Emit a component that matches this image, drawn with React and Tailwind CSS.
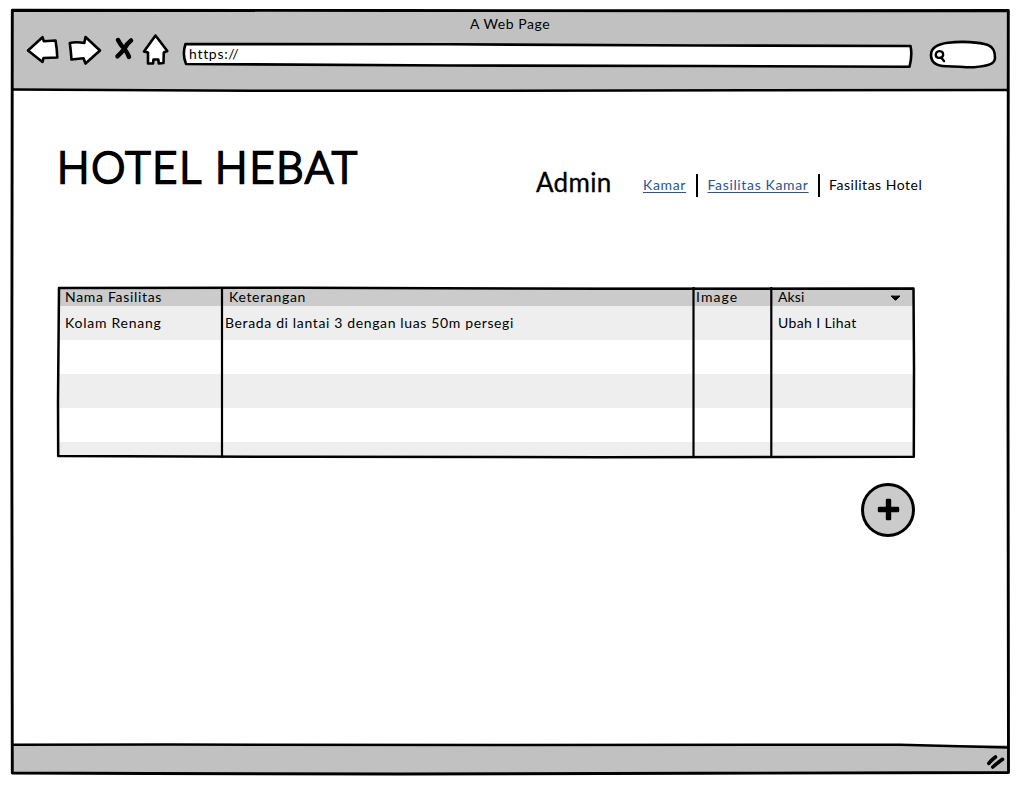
const stroke = {
  fill: "none",
  stroke: "#000",
  strokeWidth: 2.6,
  strokeLinecap: "round",
  strokeLinejoin: "round",
};

function NavIcons() {
  return (
    <svg width="150" height="40" viewBox="24 30 150 40" className="shrink-0" {...stroke} fill="#fff">
      <path d="M28 50.500L42.500 37.200L43.800 41.200L55.500 40.500Q57 49 57.300 57.500L43.500 58L42.500 62Z" />
      <path d="M69.800 43Q76 41.500 84.300 43L85.500 37L100 50.500L85.500 63.500L83.500 58.300L71.500 59.500Q70.800 50 69.800 43Z" />
      <path d="M118 40Q120.500 45 124.500 49Q127.500 53 129 56.800M131 40.500Q127 43.500 124.500 48.500Q121 53.500 117.500 56.300" fill="none" strokeWidth="4.500" />
      <path d="M155.500 35.500L167.300 51L163.800 52.500L163.500 63L158.800 63.500L158.300 59.500L153.500 59.500L153 63.500L148 63.500L148 52.500L144 51.500Z" />
    </svg>
  );
}

function AddressBar() {
  return (
    <div className="relative mt-[33px] h-[24px] w-[730px] shrink-0">
      <svg width="732" height="28" viewBox="182 42 732 28" className="absolute -top-px left-0" {...stroke} strokeWidth="2.600">
        <path d="M185.500 44L450 44.300L700 45.500L910.500 46Q912.500 55 909.500 66.800L700 66L450 65.500L186 64Q182 54 185.500 44Z" fill="#fff" />
      </svg>
      <span className="absolute left-[7px] top-[2px] text-[14px] leading-[18px] tracking-[0.7px]">https://</span>
    </div>
  );
}

function SearchBox() {
  return (
    <svg width="72" height="32" viewBox="928 38 72 32" className="ml-[16px] mt-[28px] shrink-0" {...stroke} strokeWidth="2.600">
      <path d="M931 55C931 48 938 44 948 42.800C962 41 979 42 988 45C994 47.500 995 52 995 58C995 64 988 66 974 67.200C965 67.500 955 66 946 66.200C936 66 931 62 931 55Z" fill="#fff" />
      <path d="M935.800 54.500C936 51.500 939 50.500 941.500 51.500C944 53 943.500 56.500 941.500 57.500C938.500 58.500 935.500 57.500 935.800 54.500ZM941.500 58L944 61" strokeWidth="2.400" />
    </svg>
  );
}

function FrameLines() {
  return (
    <svg width="1019" height="785" className="pointer-events-none absolute inset-0" {...stroke} strokeWidth="2.900" strokeLinecap="butt">
      <path d="M12.300 10.300L400 10.500L700 10.800L1008.300 10.500L1008 400L1008.500 772.500L700 773.300L400 774L150 773.500L12.300 773L11.800 400Z" />
      <path d="M12 89.500L250 90.700L500 90.800L750 90.200L1008 90" strokeWidth="2.500" />
      <path d="M12 744.800L170 744.500L500 745L900 744.800L1008 747.500" strokeWidth="2.500" />
    </svg>
  );
}

function TableLines() {
  return (
    <svg width="860" height="174" viewBox="56 286 860 174" className="pointer-events-none absolute -left-[2px] -top-px" {...stroke} strokeWidth="2.500" strokeLinecap="butt">
      <path d="M59 288L300 287.800L600 288.800L913.500 288.500L914 370L913.800 456.800L600 457.200L300 456.800L58.200 456L58 400Z" />
      <path d="M222 287V458M693.500 287V458M771.300 287V458" strokeWidth="2.200" />
    </svg>
  );
}

const cols = "grid grid-cols-[164px_471px_78px_143px]";

export default function App() {
  return (
    <div className="relative flex h-[785px] w-[1019px] flex-col overflow-hidden bg-white pb-[11px] pl-[12px] pr-[10px] pt-[10px] font-['Lato',sans-serif] text-[14px] text-black">
      <header className="relative flex h-[80px] shrink-0 bg-[#c1c1c1]">
        <div className="ml-[12px] mr-[8px] mt-[20px]">
          <NavIcons />
        </div>
        <AddressBar />
        <SearchBox />
        <h2 className="absolute left-[458px] top-[5px] text-[14px] leading-[18px] tracking-[0.55px]">A Web Page</h2>
      </header>

      <main className="flex min-h-0 flex-1 flex-col">
        <div className="flex h-[197px] shrink-0 whitespace-nowrap">
          <h1 className="ml-[45px] mt-[50px] w-[479px] text-[43px] font-light leading-[54px] tracking-[1.9px] [-webkit-text-stroke:2.4px_#000]">HOTEL HEBAT</h1>
          <h3 className="mt-[75px] w-[107px] text-[26px] leading-[34px] tracking-[0.3px] [-webkit-text-stroke:0.3px_#000]">Admin</h3>
          <nav className="mt-[84px] flex h-[24px] leading-[22px] tracking-[0.65px]">
            <a className="w-[53px] text-[#2a5590] underline underline-offset-2">Kamar</a>
            <span className="h-[23px] w-[2px] bg-black" />
            <a className="ml-[9.500px] w-[110px] text-[#2a5590] underline underline-offset-2">Fasilitas Kamar</a>
            <span className="h-[23px] w-[2px] bg-black" />
            <span className="ml-[9.500px] tracking-[0.52px]">Fasilitas Hotel</span>
          </nav>
        </div>

        <section className="relative ml-[46px] flex h-[170px] w-[856px] shrink-0 flex-col whitespace-nowrap tracking-[0.68px]">
          <div className={`${cols} h-[19px] shrink-0 bg-[#cbcbcb] leading-[20px]`}>
            <span className="pl-[7px]">Nama Fasilitas</span>
            <span className="pl-[7px]">Keterangan</span>
            <span className="pl-[3px] tracking-[1.100px]">Image</span>
            <span className="flex items-center pl-[7px] pr-[13px]">
              <span className="flex-1 tracking-[0.1px]">Aksi</span>
              <svg width="11" height="6" viewBox="0 0 11 6" className="mt-[2px]">
                <path d="M1 1Q5.500 1.300 10 1L6 5H5Z" stroke="#000" strokeWidth="1" strokeLinejoin="round" />
              </svg>
            </span>
          </div>
          <div className={`${cols} h-[34px] shrink-0 bg-[#eeeeee] leading-[34px]`}>
            <span className="pl-[7px] tracking-[0.75px]">Kolam Renang</span>
            <span className="pl-[3px] tracking-[0.64px]">Berada di lantai 3 dengan luas 50m persegi</span>
            <span />
            <span className="pl-[7px] tracking-[0.38px]">Ubah I Lihat</span>
          </div>
          <div className="h-[34px] shrink-0 bg-white" />
          <div className="h-[34px] shrink-0 bg-[#eeeeee]" />
          <div className="h-[34px] shrink-0 bg-white" />
          <div className="flex-1 bg-[#eeeeee]" />
          <TableLines />
        </section>

        <button aria-label="Tambah" className="ml-[849px] mt-[26px] flex size-[54px] shrink-0 items-center justify-center rounded-full border-[3px] border-black bg-[#cbcbcb]">
          <svg width="24" height="24" viewBox="0 0 24 24">
            <rect x="9.800" y="0.800" width="5.400" height="21.400" rx="1.300" />
            <rect x="1.800" y="8.800" width="21.400" height="5.400" rx="1.300" />
          </svg>
        </button>
      </main>

      <footer className="flex h-[29px] shrink-0 items-center justify-end bg-[#c1c1c1]">
        <svg width="20" height="18" viewBox="985 753 20 18" className="mr-[4px] mt-[5px]" stroke="#000" strokeWidth="3.600" strokeLinecap="round">
          <path d="M988.800 763.300Q991.500 760 995.500 757M992.800 767Q997.500 763 1002.500 759.300" fill="none" />
        </svg>
      </footer>
      <FrameLines />
    </div>
  );
}
